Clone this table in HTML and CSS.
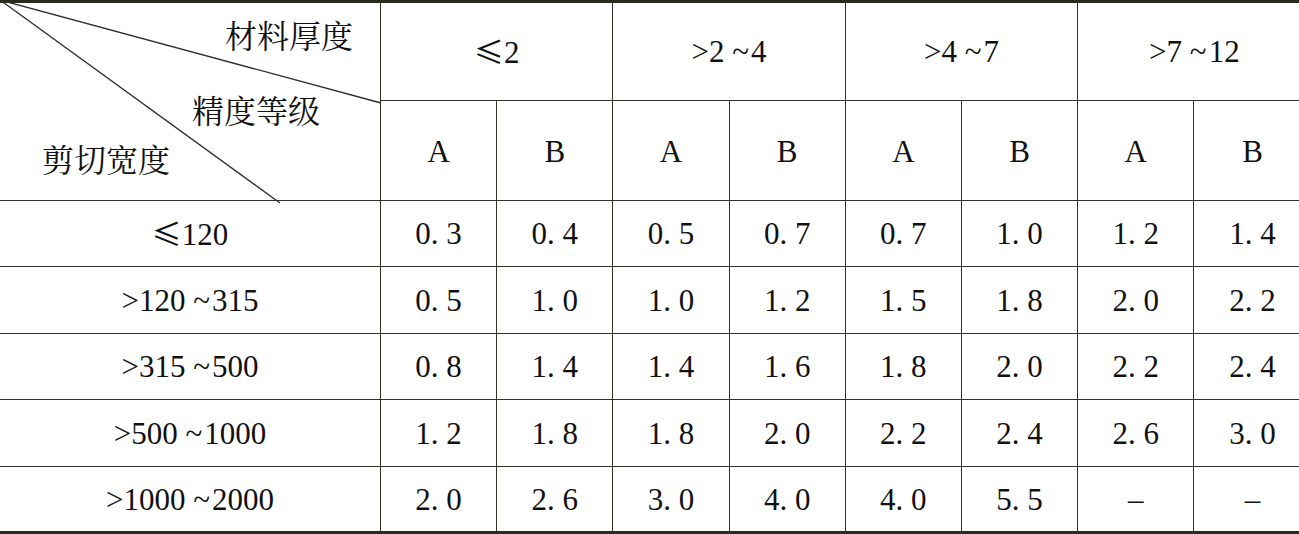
FILE: index.html
```html
<!DOCTYPE html>
<html lang="zh">
<head>
<meta charset="utf-8">
<title>剪切宽度精度表</title>
<link rel="stylesheet" href="styles.css">
</head>
<body>
<table class="grid">
  <colgroup>
    <col class="c-head">
    <col class="c-val"><col class="c-val"><col class="c-val"><col class="c-val">
    <col class="c-val"><col class="c-val"><col class="c-val"><col class="c-val">
  </colgroup>
  <thead>
    <tr class="r-top">
      <th class="corner" rowspan="2">
        <svg class="diag" width="382" height="204" viewBox="0 0 382 204" aria-hidden="true">
          <line x1="0" y1="0" x2="381" y2="103" />
          <line x1="0" y1="0" x2="280" y2="203" />
        </svg>
        <span class="lbl lbl-thick">材料厚度</span>
        <span class="lbl lbl-grade">精度等级</span>
        <span class="lbl lbl-width">剪切宽度</span>
      </th>
      <th colspan="2"><span class="le">≤</span>2</th>
      <th colspan="2">&gt;2 <span class="tl">~</span>4</th>
      <th colspan="2">&gt;4 <span class="tl">~</span>7</th>
      <th colspan="2">&gt;7 <span class="tl">~</span>12</th>
    </tr>
    <tr class="r-sub">
      <th>A</th><th>B</th><th>A</th><th>B</th><th>A</th><th>B</th><th>A</th><th>B</th>
    </tr>
  </thead>
  <tbody>
    <tr class="r-a">
      <th><span class="le">≤</span>120</th>
      <td>0. 3</td><td>0. 4</td><td>0. 5</td><td>0. 7</td><td>0. 7</td><td>1. 0</td><td>1. 2</td><td>1. 4</td>
    </tr>
    <tr class="r-b">
      <th>&gt;120 <span class="tl">~</span>315</th>
      <td>0. 5</td><td>1. 0</td><td>1. 0</td><td>1. 2</td><td>1. 5</td><td>1. 8</td><td>2. 0</td><td>2. 2</td>
    </tr>
    <tr class="r-a">
      <th>&gt;315 <span class="tl">~</span>500</th>
      <td>0. 8</td><td>1. 4</td><td>1. 4</td><td>1. 6</td><td>1. 8</td><td>2. 0</td><td>2. 2</td><td>2. 4</td>
    </tr>
    <tr class="r-b">
      <th>&gt;500 <span class="tl">~</span>1000</th>
      <td>1. 2</td><td>1. 8</td><td>1. 8</td><td>2. 0</td><td>2. 2</td><td>2. 4</td><td>2. 6</td><td>3. 0</td>
    </tr>
    <tr class="r-last">
      <th>&gt;1000 <span class="tl">~</span>2000</th>
      <td>2. 0</td><td>2. 6</td><td>3. 0</td><td>4. 0</td><td>4. 0</td><td>5. 5</td><td>–</td><td>–</td>
    </tr>
  </tbody>
</table>
</body>
</html>
```

FILE: styles.css
```css
html, body {
  margin: 0;
  padding: 0;
  background: #ffffff;
  overflow: hidden;
}

.grid {
  table-layout: fixed;
  width: 1310.6px;
  border-collapse: separate;
  border-spacing: 0;
  border-top: 3px solid #2a2a1e;
  border-bottom: 3px solid #2a2a1e;
  font-family: "Liberation Serif", "Times New Roman", serif;
  font-size: 31px;
  color: #111111;
}

.c-head { width: 381px; }
.c-val { width: 116.2px; }

.grid th,
.grid td {
  box-sizing: border-box;
  padding: 0;
  font-weight: normal;
  text-align: center;
  vertical-align: middle;
  border-right: 1px solid #34342a;
  border-bottom: 1px solid #34342a;
  line-height: 1;
  white-space: nowrap;
}

.grid tr > :last-child { border-right: 0; }

.r-top > th { height: 98px; padding-top: 0; }
.r-sub > th { height: 100px; padding-top: 2px; }
.r-a > th, .r-a > td { height: 66px; }
.r-b > th, .r-b > td { height: 67px; }
.r-last > th, .r-last > td { height: 64px; border-bottom: 0; }

.corner {
  position: relative;
  padding: 0;
}

.diag {
  position: absolute;
  left: 0;
  top: -3px;
  overflow: visible;
}
.diag line {
  stroke: #2e2e24;
  stroke-width: 1.3;
}

.lbl {
  position: absolute;
  font-family: "Noto Serif CJK SC", "Noto Sans CJK SC", sans-serif;
  font-size: 32px;
  line-height: 1;
  color: #111111;
}
.lbl-thick { left: 225px; top: 15px; }
.lbl-grade { left: 192px; top: 90px; }
.lbl-width { left: 42px; top: 139px; }

.le {
  font-family: "Noto Sans CJK SC", "DejaVu Sans", sans-serif;
  font-size: 30px;
}
.tl {
  display: inline-block;
  margin-right: 2px;
}
```
